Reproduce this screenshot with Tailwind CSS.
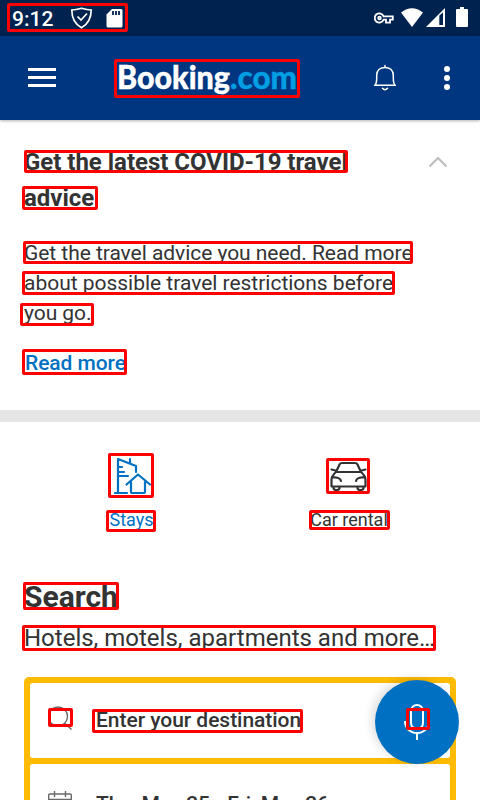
<!DOCTYPE html>
<html lang="en">
<head>
<meta charset="utf-8">
<title>Booking.com</title>
<script src="https://cdn.jsdelivr.net/npm/@tailwindcss/browser@4"></script>
</head>
<body class="bg-white">
<div class="relative w-[480px] h-[800px] overflow-hidden bg-white text-[#333333] font-[Roboto,sans-serif]">
  <div class="flex h-9 bg-[#00224f] text-white">
    <span class="ml-3 mt-px w-[58px] text-[21px] leading-9 font-medium whitespace-nowrap">9:12</span>
    <svg class="mt-[7px] w-[23px] h-[22px]" viewBox="0 0 23 22" fill="none" stroke="#fff" stroke-width="1.7"><path d="M11.5 1.2C8.5 2 5 2.8 1.8 3c0 8 2.8 14 9.700 17.700C18.200 17 21.200 11 21.200 3 18 2.800 14.500 2 11.500 1.200z"/><path d="M7.500 9.500l3.500 3.500 6-6.500"/></svg>
    <svg class="ml-[13px] mt-[9px] w-[17px] h-[19px]" viewBox="0 0 17 19"><path d="M6 0h9q1.500 0 1.500 1.500v15.500q0 1.500-1.500 1.500H2q-1.500 0-1.500-1.500V5.500z" fill="#fff"/><path d="M7 2v4M10 2v4M13 2v4" stroke="#00224f" stroke-width="1.800"/></svg>
    <svg class="ml-[251px] mt-3 w-5 h-3" viewBox="0 0 20 12" fill="none" stroke="#fff" stroke-width="1.800"><path d="M9.600 4.300A4.600 4.600 0 1 0 9.600 7.700H12v3h4v-3h2.800V4.300z"/><circle cx="5.500" cy="6" r="1.300"/></svg>
    <svg class="ml-[6px] mt-2 w-6 h-5" viewBox="0 0 24 20"><path d="M1 4.500Q12-4 23 4.500L12 19z" fill="#fff"/></svg>
    <svg class="ml-[2px] mt-2 w-[19px] h-5" viewBox="0 0 19 20"><path d="M0 19L19 0v19z" fill="#fff"/><path d="M13.300 7.500l3.700-3V17h-3.700z" fill="#00224f"/></svg>
    <svg class="ml-[11px] mt-[7px] w-3 h-5" viewBox="0 0 12 20"><path d="M4 0h4v2h3q1 0 1 1v16q0 1-1 1H1q-1 0-1-1V3q0-1 1-1h3z" fill="#fff"/></svg>
  </div>
  <div class="flex h-[84px] bg-[#003580] shadow-[0_1px_3px_rgba(0,0,0,0.3)]">
    <svg class="ml-7 mt-8 w-7 h-5" viewBox="0 0 28 20" fill="#fff"><path d="M0 0h28v3H0zM0 8h28v3H0zM0 16h28v3H0z"/></svg>
    <svg class="ml-[58px] mt-5 w-[190px] h-[50px]" viewBox="0 0 190 50"><text x="3" y="32.500" textLength="113" lengthAdjust="spacingAndGlyphs" font-family="Lato" font-weight="900" font-size="31.500" fill="#fff" stroke="#fff" stroke-width="0.400">Booking</text><text x="116" y="32.500" textLength="67" lengthAdjust="spacingAndGlyphs" font-family="Lato" font-weight="900" font-size="31.500" fill="#009fe3" stroke="#009fe3" stroke-width="0.400">.com</text></svg>
    <svg class="ml-[70px] mt-7 w-[22px] h-7" viewBox="0 0 22 28" fill="none" stroke="#fff" stroke-width="1.500" stroke-linecap="round"><path d="M11 1.500v2M.8 21.300h20.400C19.500 20 19.300 18 19.300 14V11.500C19.300 6 15.500 3.500 11 3.500S2.700 6 2.700 11.500V14c0 4-.2 6-1.900 7.300zM8.500 24.300q2.500 2.800 5 0"/></svg>
    <svg class="ml-[48px] mt-[29px] w-[6px] h-[26px]" viewBox="0 0 6 26" fill="#fff"><circle cx="3" cy="4" r="3"/><circle cx="3" cy="13" r="3"/><circle cx="3" cy="22" r="3"/></svg>
  </div>
  <div class="h-[290px] pl-6 pt-[24px]">
    <div class="flex justify-between pr-8">
      <h2 class="text-[24px] leading-9 font-bold whitespace-nowrap tracking-[-0.02px]">Get the latest COVID-19 travel<br>advice</h2>
      <svg class="mt-3 w-5 h-3" viewBox="0 0 20 12" fill="none" stroke="#bdbdbd" stroke-width="2"><path d="M1.500 10.500L10 2l8.500 8.500"/></svg>
    </div>
    <p class="mt-[22px] text-[21px] leading-[30px] whitespace-nowrap tracking-[-0.05px]">Get the travel advice you need. Read more<br><span class="tracking-[-0.02px]">about possible travel restrictions before</span><br>you go.</p>
    <a class="block mt-5 pl-px text-[21px] leading-[30px] font-medium text-[#0071c2] tracking-[-0.08px]">Read more</a>
  </div>
  <div class="h-3 bg-[#e6e6e6]"></div>
  <div class="grid grid-cols-2 px-6 pt-[33px] h-[157px] text-[18px] leading-[26px]">
    <div class="flex flex-col items-center text-[#0071c2] pr-px">
      <svg class="w-[42px] h-[42px]" viewBox="0 0 42 42" fill="none" stroke="#0071c2" stroke-width="2.200" stroke-linecap="round" stroke-linejoin="round"><path d="M4 38h12M7 38V4l18 7v6M19 8V4M7 12h4M7 17h6M7 21h10M15.500 29.500L27 19.500l12 10M20 27v9.500q0 1.500 1.500 1.500h11q1.500 0 1.500-1.500V27"/></svg>
      <span class="mt-[10px]">Stays</span>
    </div>
    <div class="flex flex-col items-center pl-[2px]">
      <svg class="w-[42px] h-[42px]" viewBox="0 0 42 42" fill="none" stroke="#333" stroke-width="2.200" stroke-linecap="round" stroke-linejoin="round"><path d="M8 17L11.500 9.500Q12.200 8 14 8h13q1.800 0 2.500 1.500L33 17zM8 17Q3.500 21 3.500 25v6.500h34V25q0-4-4.500-8M3.500 14.500l4 1M37.500 14.500l-4 1M4.500 22.500c4-.5 8 .5 8.500 3.500M36.500 22.500c-4-.5-8 .5-8.500 3.500M5.500 31.500v1.500q0 2 3 2t3-2v-1.500M29.500 31.500v1.500q0 2 3 2t3-2v-1.500"/></svg>
      <span class="mt-[10px]">Car rental</span>
    </div>
  </div>
  <div class="pl-6 h-[98px]">
    <h1 class="text-[30px] leading-[36px] font-bold">Search</h1>
    <p class="mt-[5px] text-[24px] leading-9 whitespace-nowrap">Hotels, motels, apartments and more…</p>
  </div>
  <div class="mx-6 p-[6px] flex flex-col gap-[6px] rounded-[5px] bg-[#febb02] h-[180px]">
    <div class="h-[75px] shrink-0 rounded-[3px] bg-white flex items-start">
      <svg class="ml-[18px] mt-[22px] w-6 h-[26px]" viewBox="0 0 24 26" fill="none" stroke="#6b6b6b" stroke-width="1.400"><circle cx="10" cy="11.500" r="9.500"/><path d="M17 18.500l6.500 6"/></svg>
      <span class="ml-6 mt-[22px] text-[21px] leading-[30px] font-medium whitespace-nowrap tracking-[-0.04px]">Enter your destination</span>
    </div>
    <div class="h-[75px] shrink-0 rounded-[3px] bg-white flex items-start">
      <svg class="ml-[18px] mt-[26px] w-6 h-6" viewBox="0 0 24 24" fill="none" stroke="#6b6b6b" stroke-width="1.400"><rect x=".7" y="4" width="22.600" height="19" rx="1"/><path d="M.7 9.500h22.600M6.500 1v6M17.500 1v6"/></svg>
      <span class="ml-6 mt-[25px] text-[21px] leading-[30px] font-medium whitespace-nowrap tracking-[-0.1px]">Thu, May 25 - Fri, May 26</span>
    </div>
  </div>

  <div class="absolute left-[375px] top-[680px] w-[84px] h-[84px] rounded-full bg-[#0071c2] shadow-[-4px_-2px_9px_rgba(0,0,0,0.12)]">
    <svg class="absolute left-7 top-[22px] w-7 h-10" viewBox="0 0 28 40" fill="none" stroke="#fff" stroke-width="2"><rect x="8" y="3" width="12" height="24" rx="6"/><path d="M2 19c0 7 5 12 12 12s12-5 12-12M14 31v7"/></svg>
  </div>

  <div class="absolute left-[7px] top-[3px] w-[121px] h-[29px] border-3 border-[#f00] rounded-[2px]"></div>
  <div class="absolute left-[114px] top-[59px] w-[186px] h-[39px] border-3 border-[#f00] rounded-[2px]"></div>
  <div class="absolute left-[24px] top-[150px] w-[324px] h-[23px] border-3 border-[#f00] rounded-[2px]"></div>
  <div class="absolute left-[22px] top-[186px] w-[76px] h-[24px] border-3 border-[#f00] rounded-[2px]"></div>
  <div class="absolute left-[23px] top-[241px] w-[390px] h-[23px] border-3 border-[#f00] rounded-[2px]"></div>
  <div class="absolute left-[22px] top-[271px] w-[373px] h-[24px] border-3 border-[#f00] rounded-[2px]"></div>
  <div class="absolute left-[20px] top-[303px] w-[74px] h-[23px] border-3 border-[#f00] rounded-[2px]"></div>
  <div class="absolute left-[22px] top-[349px] w-[105px] h-[26px] border-3 border-[#f00] rounded-[2px]"></div>
  <div class="absolute left-[108px] top-[453px] w-[46px] h-[45px] border-3 border-[#f00] rounded-[2px]"></div>
  <div class="absolute left-[106px] top-[510px] w-[50px] h-[22px] border-3 border-[#f00] rounded-[2px]"></div>
  <div class="absolute left-[326px] top-[458px] w-[44px] h-[36px] border-3 border-[#f00] rounded-[2px]"></div>
  <div class="absolute left-[309px] top-[510px] w-[81px] h-[20px] border-3 border-[#f00] rounded-[2px]"></div>
  <div class="absolute left-[23px] top-[582px] w-[96px] h-[28px] border-3 border-[#f00] rounded-[2px]"></div>
  <div class="absolute left-[22px] top-[625px] w-[414px] h-[26px] border-3 border-[#f00] rounded-[2px]"></div>
  <div class="absolute left-[48px] top-[708px] w-[25px] h-[19px] border-3 border-[#f00] rounded-[2px]"></div>
  <div class="absolute left-[92px] top-[709px] w-[211px] h-[24px] border-3 border-[#f00] rounded-[2px]"></div>
  <div class="absolute left-[406px] top-[708px] w-[24px] h-[22px] border-3 border-[#f00] rounded-[2px]"></div>
</div>
</body>
</html>
